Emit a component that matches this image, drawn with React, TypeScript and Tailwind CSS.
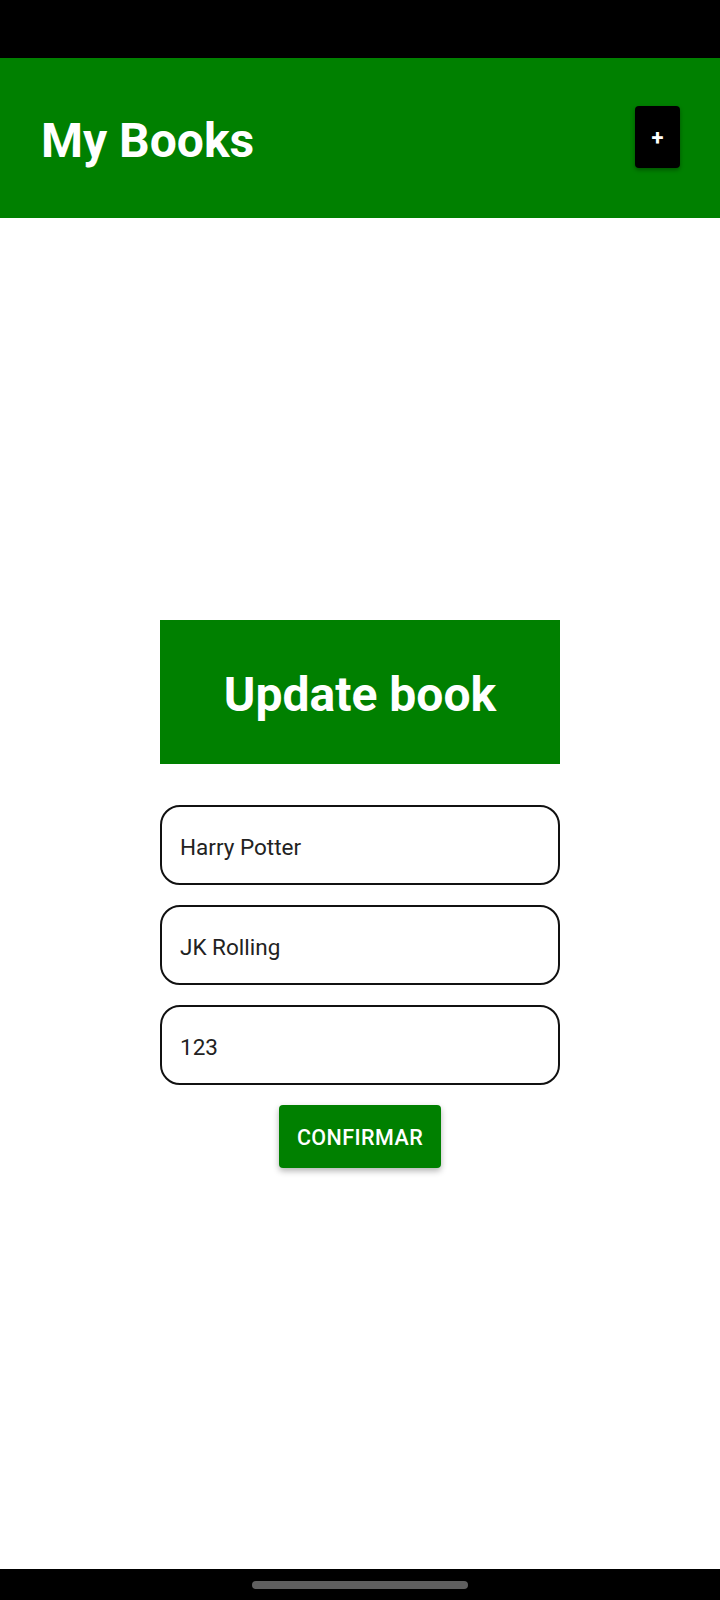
import React from 'react';

const fields = ['Harry Potter', 'JK Rolling', '123'];

export default function App() {
  return (
    <div
      className="flex h-[1600px] w-[720px] flex-col bg-white"
      style={{ fontFamily: 'Roboto, "Liberation Sans", sans-serif' }}
    >
      {/* status bar */}
      <div className="h-[58px] bg-black" />

      {/* header */}
      <div className="flex h-[160px] items-center justify-between bg-[#008000] pl-[41px] pr-[40px]">
        <h1 className="mt-[6px] text-[48px] leading-none font-bold text-white">My Books</h1>
        <button className="mb-[2px] flex h-[62px] w-[45px] items-center justify-center rounded-[4px] bg-black text-[22px] font-bold text-white shadow-[0_2px_4px_rgba(0,0,0,0.35)]">
          +
        </button>
      </div>

      {/* content */}
      <div className="flex flex-1 flex-col items-center justify-center">
        <div className="flex w-[400px] flex-col items-center">
          <div className="flex h-[144px] w-full items-center justify-center bg-[#008000] pt-[6px]">
            <span className="text-[48px] leading-none font-bold text-white">Update book</span>
          </div>

          <div className="mt-[41px] flex w-full flex-col gap-[20px]">
            {fields.map((f) => (
              <input
                key={f}
                defaultValue={f}
                className="h-[80px] w-full rounded-[20px] border-2 border-[#111] pt-[4px] pl-[18px] pr-[18px] text-[22.5px] text-[#222] outline-none"
              />
            ))}
          </div>

          <button className="mt-[20px] flex h-[63px] w-[162px] items-center justify-center rounded-[4px] bg-[#008000] pt-[4px] text-[21.5px] font-medium tracking-[0.02em] text-white shadow-[0_3px_6px_rgba(0,0,0,0.3)]">
            CONFIRMAR
          </button>
        </div>
      </div>

      {/* navigation bar */}
      <div className="flex h-[31px] items-center justify-center bg-black">
        <div className="h-[8px] w-[216px] rounded-full bg-[#5f5f5f]" />
      </div>
    </div>
  );
}
